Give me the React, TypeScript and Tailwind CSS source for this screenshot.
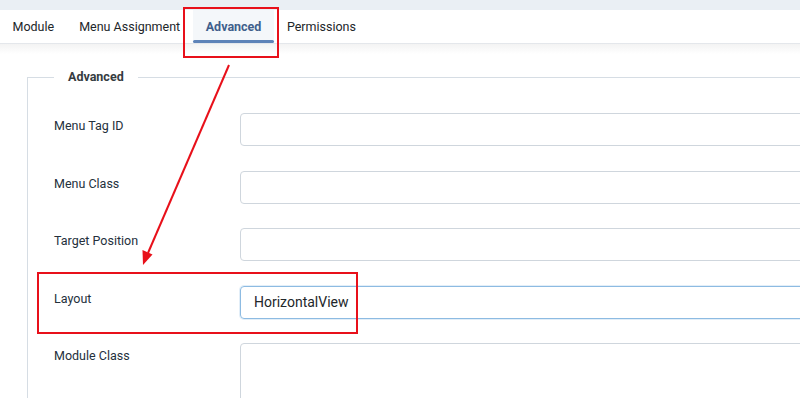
import React from 'react';

const tabs = ['Module', 'Menu Assignment', 'Advanced', 'Permissions'];

const fields = [
  { label: 'Menu Tag ID', value: '' },
  { label: 'Menu Class', value: '' },
  { label: 'Target Position', value: '' },
  { label: 'Layout', value: 'HorizontalView', focused: true },
];

const App: React.FC = () => {
  return (
    <div className="relative w-[800px] h-[398px] overflow-hidden bg-white font-['Roboto',sans-serif] text-[#22262a]">
      <div className="h-[10px] bg-[#eaeff4]" />

      <div className="flex h-[34px] border-b border-[#e4e7eb] bg-white">
        {tabs.map((tab) => {
          const active = tab === 'Advanced';
          return (
            <div
              key={tab}
              className={
                active
                  ? 'relative flex items-center pt-[2px] px-[13px] text-[12.5px] font-bold text-[#3f5f8c] bg-[#f4f7fa]'
                  : 'flex items-center pt-[2px] px-[12.5px] text-[12.5px] text-[#22262a]'
              }
            >
              {tab}
              {active && <span className="absolute left-[0px] right-[0px] bottom-[0px] h-[3px] rounded-full bg-[#5e83b8]" />}
            </div>
          );
        })}
      </div>

      <div className="bg-gradient-to-b from-[#f3f3f3] to-white to-[10px] pt-[23px] pl-[27px]">
        <fieldset className="w-[900px] border-l border-t border-[#d6dde4] pl-[26px] pt-[26px]">
          <legend className="px-[14px] text-[12.5px] leading-5 font-bold text-[#353b41]">Advanced</legend>
          <div className="flex flex-col gap-y-[24.5px]">
            {fields.map((f) => (
              <div key={f.label} className="flex">
                <label className="w-[186px] pt-[3px] text-[12.5px] leading-5 text-[#24303c]">{f.label}</label>
                <input
                  readOnly
                  value={f.value}
                  className={
                    f.focused
                      ? 'w-[600px] h-[33px] rounded-[4px] border border-[#8dbbe2] px-[13px] text-[14px] text-[#22262a] shadow-[0_0_0_1px_rgba(141,187,226,0.25)] outline-none'
                      : 'w-[600px] h-[33px] rounded-[4px] border border-[#cfd6dd] px-[13px] text-[14px] outline-none'
                  }
                />
              </div>
            ))}
            <div className="flex">
              <label className="w-[186px] pt-[3px] text-[12.5px] leading-5 text-[#24303c]">Module Class</label>
              <textarea readOnly className="w-[600px] h-[80px] rounded-[4px] border border-[#cfd6dd] resize-none outline-none" />
            </div>
          </div>
        </fieldset>
      </div>

      {/* annotation overlays */}
      <div className="absolute left-[183px] top-[7px] w-[96px] h-[51px] border-2 border-[#e8101a]" />
      <div className="absolute left-[37px] top-[272px] w-[321px] h-[62px] border-2 border-[#e8101a]" />
      <svg className="absolute left-0 top-0 pointer-events-none" width="800" height="398">
        <line x1="229" y1="65" x2="148" y2="253" stroke="#e8101a" strokeWidth="2" />
        <polygon points="143,265 142.5,250 152.5,254.5" fill="#e8101a" />
      </svg>
    </div>
  );
};

export default App;
